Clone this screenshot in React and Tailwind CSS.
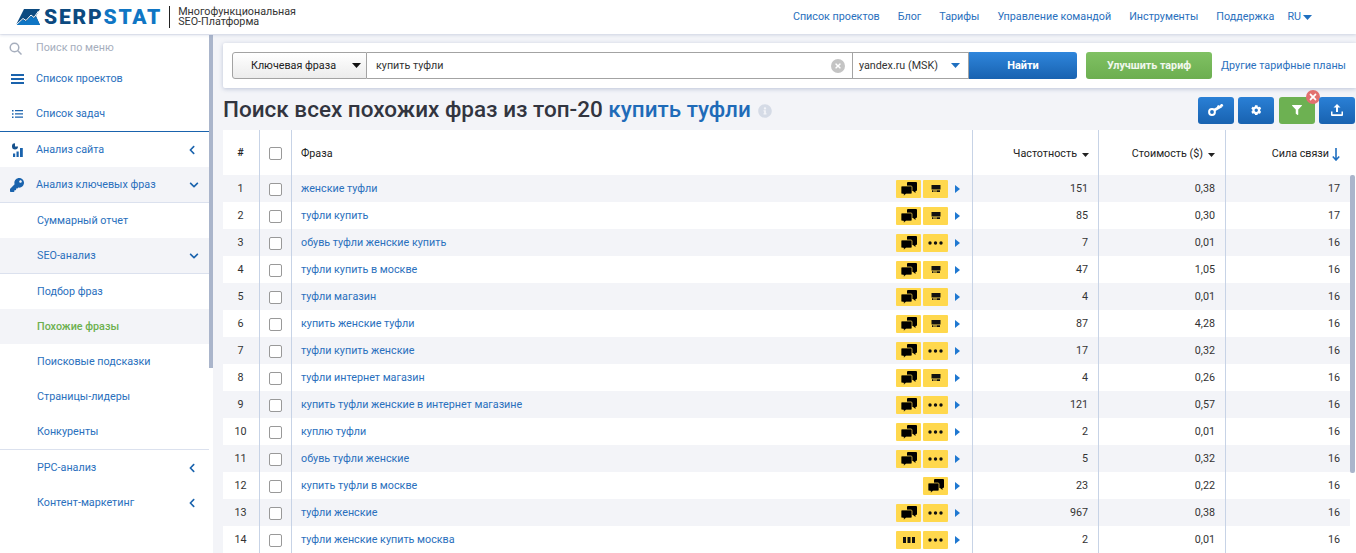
import React from 'react';
import { FaKey, FaCog, FaFilter, FaChevronLeft, FaChevronDown, FaTimes, FaInfoCircle } from 'react-icons/fa';

const topLinks = ['Список проектов', 'Блог', 'Тарифы', 'Управление командой', 'Инструменты', 'Поддержка'];

const rows = [
    ['женские туфли', 'cs', 151, '0,38', 17],
    ['туфли купить', 'cs', 85, '0,30', 17],
    ['обувь туфли женские купить', 'cd', 7, '0,01', 16],
    ['туфли купить в москве', 'cs', 47, '1,05', 16],
    ['туфли магазин', 'cs', 4, '0,01', 16],
    ['купить женские туфли', 'cs', 87, '4,28', 16],
    ['туфли купить женские', 'cd', 17, '0,32', 16],
    ['туфли интернет магазин', 'cs', 4, '0,26', 16],
    ['купить туфли женские в интернет магазине', 'cd', 121, '0,57', 16],
    ['куплю туфли', 'cd', 2, '0,01', 16],
    ['обувь туфли женские', 'cd', 5, '0,32', 16],
    ['купить туфли в москве', 'c', 23, '0,22', 16],
    ['туфли женские', 'cd', 967, '0,38', 16],
    ['туфли женские купить москва', 'bd', 2, '0,01', 16],
];

const Caret = ({ className = '', w = 9, h = 5 }) => (
    <svg width={w} height={h} viewBox="0 0 9 5" preserveAspectRatio="none" className={className}>
        <path d="M0 0h9L4.5 5z" fill="currentColor" />
    </svg>
);

const Logo = () => (
    <div className="flex items-center">
        <svg width="24" height="16" viewBox="0 0 24 16" className="mr-[4px]">
            <path d="M8 0H24L20 7L24 16H0z" fill="#0c4a80" />
            <path d="M0 16L7 10.500L10 12.500L15 7L18 9.500L20 7.500L24 16z" fill="#1076c4" />
            <path d="M0 16L7 9.500L10 11.500L15 6L18 8.500L22.500 2" fill="none" stroke="#fff" strokeWidth="1" />
        </svg>
        <span className="text-[21px] font-black leading-none tracking-[1.8px]">
            <span className="text-[#0c4a80]">SERP</span>
            <span className="text-[#1076c4]">STAT</span>
        </span>
        <div className="ml-[7px] mr-[8px] h-[22px] w-px bg-[#222]" />
        <div className="text-[10.75px] leading-[10px] text-[#333]">
            Многофункциональная
            <br />
            SEO-Платформа
        </div>
    </div>
);

const ChatIcon = () => (
    <svg width="16" height="14" viewBox="0 0 16 14">
        <path d="M7 0h8a1 1 0 0 1 1 1v7a1 1 0 0 1-1 1h-.5v2l-2.500-2H7a1 1 0 0 1-1-1V1a1 1 0 0 1 1-1z" fill="#000" />
        <path
            d="M1 4h9a1 1 0 0 1 1 1v6a1 1 0 0 1-1 1H5l-2.500 2V12H1a1 1 0 0 1-1-1V5a1 1 0 0 1 1-1z"
            fill="#000"
            stroke="#ffd84d"
            strokeWidth="0.7"
        />
    </svg>
);

const StoreIcon = () => (
    <svg width="10" height="7" viewBox="0 0 10 7">
        <path d="M0.500 0h9v4.500H0.500z" fill="#111" />
        <path d="M1 5.200h1.500V7H1zM3.500 5.200h1V7h-1zM5.500 5.200H9V7H5.500z" fill="#111" />
    </svg>
);

const DotsIcon = () => (
    <svg width="15" height="4" viewBox="0 0 15 4">
        <circle cx="2" cy="2" r="1.700" fill="#111" />
        <circle cx="7.500" cy="2" r="1.700" fill="#111" />
        <circle cx="13" cy="2" r="1.700" fill="#111" />
    </svg>
);

const BarsIcon = () => (
    <svg width="12" height="6" viewBox="0 0 12 6">
        <path d="M0 0h3v6H0zM4.500 0h3v6h-3zM9 0h3v6H9z" fill="#111" />
    </svg>
);

const Badge = ({ children }) => (
    <span className="flex h-[18px] w-[25px] items-center justify-center rounded-[1px] bg-[#ffd84d]">{children}</span>
);

const RowBadges = ({ kind }) => (
    <div className="flex items-center gap-[2px]">
        {kind[0] === 'b' ? (
            <Badge>
                <BarsIcon />
            </Badge>
        ) : (
            <Badge>
                <ChatIcon />
            </Badge>
        )}
        {kind[1] === 's' && (
            <Badge>
                <StoreIcon />
            </Badge>
        )}
        {kind[1] === 'd' && (
            <Badge>
                <DotsIcon />
            </Badge>
        )}
        <svg width="5" height="8" viewBox="0 0 5 8" className="ml-[5px] mr-[12px]">
            <path d="M0 0l5 4-5 4z" fill="#1f78d1" />
        </svg>
    </div>
);

const MenuIcon = () => (
    <svg width="13" height="10" viewBox="0 0 13 10" className="text-[#1a63ad]">
        <path d="M0 0h13v2H0zM0 4h13v2H0zM0 8h13v2H0z" fill="currentColor" />
    </svg>
);

const TasksIcon = () => (
    <svg width="11" height="8" viewBox="0 0 11 8">
        <path d="M0 0h1.500v1.500H0zM3 0h8v1.200H3zM0 3.200h1.500v1.500H0zM3 3.300h8v1.200H3zM0 6.500h1.500V8H0zM3 6.600h8v1.200H3z" fill="#1a63ad" />
    </svg>
);

const SiteIcon = () => (
    <svg width="11" height="14" viewBox="0 0 11 14">
        <path d="M0 3.500A3 3 0 0 1 3 0.300v3.200h3A3 3 0 1 1 0 3.500z" fill="#16518c" />
        <path d="M1 10.500h2.200V14H1zM4.500 8.500h2.200V14H4.500zM8 5h2.800v9H8z" fill="#1a63ad" />
    </svg>
);

const SideItem = ({ icon, label, h, gray, arrow, sub, border, active }) => (
    <div
        className={`relative flex shrink-0 items-center ${h} ${gray ? 'bg-[#f3f4f8]' : ''} ${border ? 'border-b border-[#dbe1ee]' : ''} ${sub ? 'pl-[37px]' : 'pl-[36px]'} pr-[10px]`}
    >
        {icon && <span className="absolute left-[9px] flex w-[16px] justify-center">{icon}</span>}
        <span className={`mt-[2px] flex-1 text-[10.75px] ${active ? 'font-medium text-[#6cb04f]' : 'text-[#2a70bd]'}`}>{label}</span>
        {arrow === 'left' && <FaChevronLeft className="mr-[2px] text-[10px] text-[#1a63ad]" />}
        {arrow === 'down' && <FaChevronDown className="text-[10px] text-[#1a63ad]" />}
    </div>
);

const Sidebar = () => (
    <aside className="flex h-full w-[213px] shrink-0 bg-white">
        <nav className="flex h-full w-[209px] flex-col overflow-hidden">
            <div className="relative flex h-[26px] shrink-0 items-center pl-[36px] text-[10.75px] text-[#a6aebd]">
                <svg width="13" height="13" viewBox="0 0 13 13" fill="none" stroke="#a6aebd" strokeWidth="1.500" className="absolute left-[9px]">
                    <circle cx="5.500" cy="5.500" r="4.300" />
                    <path d="M8.800 8.800L12.500 12.500" />
                </svg>
                Поиск по меню
            </div>
            <SideItem icon={<MenuIcon />} label="Список проектов" h="h-[35px]" />
            <SideItem icon={<TasksIcon />} label="Список задач" h="h-[35px]" />
            <div className="h-px shrink-0 bg-[#1a63ad]" />
            <SideItem icon={<SiteIcon />} label="Анализ сайта" h="h-[35px]" arrow="left" />
            <SideItem icon={<FaKey className="text-[14px] text-[#1a63ad]" />} label="Анализ ключевых фраз" h="h-[36px]" gray border arrow="down" />
            <SideItem label="Суммарный отчет" h="h-[35px]" sub />
            <SideItem label="SEO-анализ" h="h-[36px]" gray border sub arrow="down" />
            <SideItem label="Подбор фраз" h="h-[35px]" sub />
            <SideItem label="Похожие фразы" h="h-[35px]" sub gray active />
            <SideItem label="Поисковые подсказки" h="h-[35px]" sub />
            <SideItem label="Страницы-лидеры" h="h-[35px]" sub />
            <SideItem label="Конкуренты" h="h-[35px]" sub />
            <div className="h-px shrink-0 bg-[#dbe1ee]" />
            <SideItem label="PPC-анализ" h="h-[35px]" sub arrow="left" />
            <SideItem label="Контент-маркетинг" h="h-[35px]" sub arrow="left" />
        </nav>
        <div className="h-[333px] w-[4px] bg-[#aab5cb]" />
    </aside>
);

const SearchPanel = () => (
    <div className="mt-[8px] flex h-[45px] shrink-0 items-center rounded-l-[2px] bg-white pl-[9px] text-[10.75px] shadow-[0_1px_4px_rgba(120,135,175,0.45)]">
        <div className="flex h-[27px] items-center">
            <div className="flex h-full w-[135px] items-center rounded-l-[3px] border border-[#a3a3a3] bg-gradient-to-b from-white to-[#ececec] pl-[18px] pr-[5px] text-[#222]">
                <span className="mt-[2px] flex-1">Ключевая фраза</span>
                <Caret className="text-[#111]" />
            </div>
            <div className="flex h-full w-[485px] items-center border-y border-[#a3a3a3] bg-white pl-[9px] pr-[7px] text-[#333]">
                <span className="mt-[2px] flex-1">купить туфли</span>
                <span className="flex h-[14px] w-[14px] items-center justify-center rounded-full bg-[#c4c4c4]">
                    <FaTimes className="text-[8px] text-white" />
                </span>
            </div>
            <div className="flex h-full w-[117px] items-center border border-[#a3a3a3] bg-white pl-[6px] pr-[8px] text-[#333]">
                <span className="mt-[2px] flex-1">yandex.ru (MSK)</span>
                <Caret className="text-[#1f6fc0]" />
            </div>
            <div className="flex h-full w-[108px] items-center justify-center rounded-r-[3px] bg-gradient-to-b from-[#2f86dc] to-[#1862b0] pt-[2px] text-[11px] font-bold text-white">
                Найти
            </div>
        </div>
        <div className="ml-[9px] flex h-[27px] w-[126px] items-center justify-center rounded-[3px] bg-gradient-to-b from-[#80c163] to-[#6cae50] pt-[2px] font-bold text-white/90">
            Улучшить тариф
        </div>
        <a className="ml-[9px] mt-px text-[#2a70bd]">Другие тарифные планы</a>
    </div>
);

const ToolButton = ({ children, green, extra }) => (
    <div
        className={`relative flex h-[27px] w-[36px] items-center justify-center rounded-[3px] text-white ${green ? 'bg-[#6db152]' : 'bg-gradient-to-b from-[#2a80d6] to-[#1862b0]'}`}
    >
        {children}
        {extra}
    </div>
);

const TitleBar = () => (
    <div className="flex h-[42px] shrink-0 items-center pr-[1px]">
        <h1 className="flex-1 text-[22.5px] font-medium leading-none text-[#32353f]">
            Поиск всех похожих фраз из топ-20 <span className="text-[#1f6bb8]">купить туфли</span>
            <FaInfoCircle className="ml-[7px] inline align-[-1px] text-[14px] text-[#d5dbe6]" />
        </h1>
        <div className="mt-[2px] flex gap-[4.5px]">
            <ToolButton>
                <svg width="16" height="12" viewBox="0 0 16 12" fill="none" stroke="#fff">
                    <circle cx="4" cy="8" r="2.900" strokeWidth="2" />
                    <path d="M6.500 6L13.500 2" strokeWidth="2.600" />
                    <path d="M11 4L9.800 1.500M14.500 2.500L13.300 0" strokeWidth="2" />
                </svg>
            </ToolButton>
            <ToolButton>
                <FaCog className="text-[10.5px]" />
            </ToolButton>
            <ToolButton
                green
                extra={
                    <span className="absolute -right-[5px] -top-[7px] flex h-[14px] w-[14px] items-center justify-center rounded-full bg-[#e2706f]">
                        <FaTimes className="text-[10px] text-white" />
                    </span>
                }
            >
                <FaFilter className="text-[10px]" />
            </ToolButton>
            <ToolButton>
                <svg width="12" height="12" viewBox="0 0 12 12" fill="white">
                    <path d="M6 0L9.500 3.500H7V8H5V3.500H2.500z" />
                    <path d="M0 7.500h1.500V10.300h9V7.500H12V11a1 1 0 0 1-1 1H1a1 1 0 0 1-1-1z" />
                </svg>
            </ToolButton>
        </div>
    </div>
);

const cell = 'border-l border-[#c7d3e6]';

const DataTable = () => (
    <div className="flex-1 overflow-hidden bg-white">
        <div className="grid h-[45px] grid-cols-[36px_32px_681px_126px_127px_1fr] text-[10.75px] text-[#222]">
            <div className="flex items-center justify-center pr-[1px] pt-[2px] font-medium">#</div>
            <div className={`${cell} flex items-center justify-center pt-[2px]`}>
                <span className="h-[13px] w-[13px] rounded-[2px] border border-[#999] bg-white" />
            </div>
            <div className={`${cell} flex items-center pl-[9px] pt-[4px]`}>Фраза</div>
            <div className={`${cell} flex items-center justify-end gap-[5px] pr-[9px] pt-[4px]`}>
                Частотность <Caret w={7} h={4} />
            </div>
            <div className={`${cell} flex items-center justify-end gap-[5px] pr-[10px] pt-[4px]`}>
                Стоимость ($) <Caret w={7} h={4} />
            </div>
            <div className={`${cell} flex items-center justify-end gap-[3px] pr-[16px] pt-[4px]`}>
                Сила связи
                <svg width="8" height="13" viewBox="0 0 8 13" fill="none" stroke="#1f6fc0" strokeWidth="1.600">
                    <path d="M4 0v12M0.800 8.500L4 12l3.200-3.500" />
                </svg>
            </div>
        </div>
        <div className="flex">
            <div className="min-w-0 flex-1">
                {rows.map((r, i) => (
                    <div
                        key={i}
                        className={`grid h-[27px] grid-cols-[36px_32px_681px_126px_127px_1fr] text-[10.75px] text-[#333] ${i % 2 === 0 ? 'bg-[#f3f4f8]' : ''}`}
                    >
                        <div className="flex items-center justify-center pr-[1px] pt-[2px]">{i + 1}</div>
                        <div className={`${cell} flex items-center justify-center pt-[2px]`}>
                            <span className="h-[13px] w-[13px] rounded-[2px] border border-[#999] bg-white" />
                        </div>
                        <div className={`${cell} flex items-center justify-between pl-[9px]`}>
                            <a className="mt-[2px] text-[#2a70bd]">{r[0]}</a>
                            <RowBadges kind={r[1]} />
                        </div>
                        <div className={`${cell} flex items-center justify-end pr-[10px] pt-[2px]`}>{r[2]}</div>
                        <div className={`${cell} flex items-center justify-end pr-[10px] pt-[2px]`}>{r[3]}</div>
                        <div className={`${cell} flex items-center justify-end pr-[10px] pt-[2px]`}>{r[4]}</div>
                    </div>
                ))}
            </div>
            <div className="w-[6px] shrink-0 pr-px">
                <div className="h-[298px] rounded-[2px] bg-[#aab5cb]" />
            </div>
        </div>
    </div>
);

export default function App() {
    return (
        <div className="flex h-[553px] w-[1356px] flex-col overflow-hidden bg-[#f3f4f8] font-['Roboto',sans-serif]">
            <header className="relative z-10 flex h-[34px] shrink-0 items-center justify-between bg-white pl-[16px] pr-[44px] shadow-[0_1px_3px_rgba(120,135,175,0.3)]">
                <Logo />
                <div className="flex items-center text-[10.75px] text-[#2a70bd]">
                    <div className="flex gap-[18px]">
                        {topLinks.map((l) => (
                            <a key={l}>{l}</a>
                        ))}
                    </div>
                    <span className="ml-[13px] flex items-center gap-[2px]">
                        RU <Caret className="text-[#1f6fc0]" />
                    </span>
                </div>
            </header>
            <div className="flex min-h-0 flex-1 pt-px">
                <Sidebar />
                <main className="ml-[10px] flex min-w-0 flex-1 flex-col">
                    <SearchPanel />
                    <TitleBar />
                    <DataTable />
                </main>
            </div>
        </div>
    );
}
